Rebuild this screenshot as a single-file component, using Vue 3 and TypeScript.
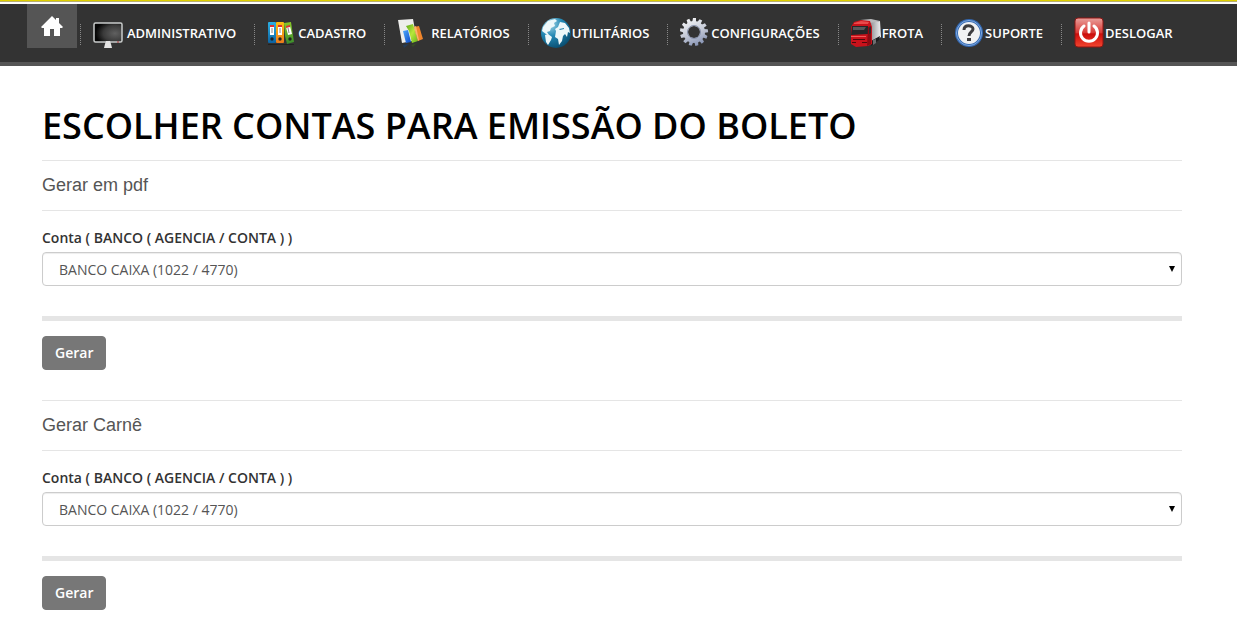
<script setup lang="ts">
import { ref } from 'vue'

interface NavItem {
  id: string
  label: string
  wide?: boolean
}

const items: NavItem[] = [
  { id: 'admin', label: 'ADMINISTRATIVO', wide: true },
  { id: 'cadastro', label: 'CADASTRO' },
  { id: 'relatorios', label: 'RELATÓRIOS', wide: true },
  { id: 'utilitarios', label: 'UTILITÁRIOS' },
  { id: 'config', label: 'CONFIGURAÇÕES' },
  { id: 'frota', label: 'FROTA' },
  { id: 'suporte', label: 'SUPORTE' },
  { id: 'deslogar', label: 'DESLOGAR' },
]

const contas: string[] = ['BANCO CAIXA (1022 / 4770)']

const secoes = ref([
  { id: 'pdf', titulo: 'Gerar em pdf', conta: contas[0] },
  { id: 'carne', titulo: 'Gerar Carnê', conta: contas[0] },
])

const teeth = Array.from({ length: 13 }, (_, i) => (i * 360) / 13)
</script>

<template>
  <header class="topbar">
    <nav class="nav" aria-label="Menu principal">
      <a class="home" href="#" aria-label="Início">
        <svg width="22" height="20" viewBox="0 0 22 20"><path fill="#fff" d="M11 0L0 11l1 1h2v8h6v-7h4v7h6v-8h2l1-1-4-4V2h-3v2z" /></svg>
      </a>
      <a v-for="item in items" :key="item.id" class="item" href="#">
        <span class="icon" :class="{ wide: item.wide }">
          <svg width="32" height="32" viewBox="0 0 32 32" aria-hidden="true">
            <template v-if="item.id === 'admin'">
              <defs>
                <radialGradient id="scr" cx=".75" cy=".55" r=".7"><stop offset="0" stop-color="#606060" /><stop offset=".6" stop-color="#3a3a3a" /><stop offset="1" stop-color="#050505" /></radialGradient>
              </defs>
              <rect x="2" y="6" width="28" height="19" rx="1.5" fill="url(#scr)" stroke="#c9cccb" stroke-width="1.5" />
              <path fill="#e4e4e4" d="M14 24h4l1 3 1 4h-8l1-4z" />
              <path stroke="#a33" d="M25 25h2" />
            </template>
            <template v-else-if="item.id === 'cadastro'">
              <defs>
                <linearGradient id="bl" x1="0" y1="0" x2="0" y2="1"><stop offset="0" stop-color="#2cb0e4" /><stop offset="1" stop-color="#0d62a0" /></linearGradient>
                <linearGradient id="or" x1="0" y1="0" x2="0" y2="1"><stop offset="0" stop-color="#fcc013" /><stop offset="1" stop-color="#ec7a1b" /></linearGradient>
                <linearGradient id="gr" x1="0" y1="0" x2="0" y2="1"><stop offset="0" stop-color="#8bc926" /><stop offset="1" stop-color="#378a2c" /></linearGradient>
              </defs>
              <rect x="2" y="5" width="8" height="21" rx="1" fill="url(#bl)" />
              <rect x="10" y="5" width="8" height="21" rx="1" fill="url(#or)" />
              <path fill="url(#gr)" d="M18 6l7-1 3 20-7 2-2-8z" />
              <path fill="#fff" d="M4 9h4v9H4zM12 9h4v9h-4zM20 10l4-1 2 8-4 1z" />
              <path fill="#d33" d="M4 8h4v2H4zM12 8h4v2h-4zM20 9l4-1v2l-4 1z" />
              <path stroke="#8a8a8a" d="M6 11v5M14 11v5M22 11l1 5" />
              <g fill="#222"><circle cx="6" cy="22" r="1.700" /><circle cx="14" cy="22" r="1.700" /><circle cx="24" cy="22" r="1.700" /></g>
              <path fill="#111" opacity=".5" d="M2 27h26v1H2z" />
            </template>
            <template v-else-if="item.id === 'relatorios'">
              <defs>
                <linearGradient id="b2" x1="0" y1="0" x2="1" y2="1"><stop offset="0" stop-color="#4fa9fb" /><stop offset="1" stop-color="#0b49c8" /></linearGradient>
                <linearGradient id="g2" x1="0" y1="0" x2="1" y2="1"><stop offset="0" stop-color="#5aa81a" /><stop offset=".5" stop-color="#b8e83a" /><stop offset="1" stop-color="#62b01c" /></linearGradient>
              </defs>
              <path fill="#eeeeec" d="M2 3l15-1 4 21-15 3z" />
              <path fill="url(#b2)" d="M7 14l5-1 3 12-5 1z" />
              <path fill="url(#g2)" d="M10 9l7-2 5 17-6 2-3-12z" />
              <path fill="#f0862c" d="M18 10l5-1 4 13-5 2z" />
              <path fill="#f9b56b" d="M18 10l2-1 3 14-1 1z" />
              <path fill="#14447c" opacity=".5" d="M7 28l6-1-5 4z" />
              <path fill="#3f6a1c" opacity=".4" d="M15 28l6-2-4 4z" />
            </template>
            <template v-else-if="item.id === 'utilitarios'">
              <defs>
                <radialGradient id="globe" cx=".3" cy=".2" r=".9"><stop offset="0" stop-color="#a9d9e8" /><stop offset=".45" stop-color="#2388b4" /><stop offset="1" stop-color="#074769" /></radialGradient>
              </defs>
              <circle cx="16" cy="16" r="15" fill="url(#globe)" />
              <path fill="#eef8fa" d="M3 10l5-6 7-2 2 2-3 2 1 3-4 2-1 3-3 1 2 3-3-1-4-3zM5 18l3-1 4 3-1 3-3 5-2-3zM16 14l-1-2 3-2 2-5 5 1 4 5 1 5-2-1-1 5-2-3-2 2-1 5-3 4-1-6-3-2z" />
              <path fill="#2a86ad" d="M19 12l5-1v1l-4 1z" />
            </template>
            <template v-else-if="item.id === 'config'">
              <defs>
                <linearGradient id="gear" gradientUnits="userSpaceOnUse" x1="8" y1="2" x2="19" y2="29"><stop offset="0" stop-color="#f4f5f7" /><stop offset=".5" stop-color="#c6cbd8" /><stop offset="1" stop-color="#8592b3" /></linearGradient>
                <mask id="gearmask">
                  <path v-for="a in teeth" :key="a" :transform="`rotate(${a} 15 15)`" fill="#fff" d="M13 6l1-5h3l0 5z" />
                  <circle cx="15" cy="15" r="11" fill="#fff" />
                  <circle cx="15" cy="15" r="6" fill="#000" />
                </mask>
              </defs>
              <rect width="32" height="32" fill="url(#gear)" mask="url(#gearmask)" />
              <circle cx="15" cy="15" r="6.5" fill="none" stroke="#8690aa" />
            </template>
            <template v-else-if="item.id === 'frota'">
              <defs>
                <linearGradient id="box" x1="0" y1="0" x2="1" y2="0"><stop offset="0" stop-color="#8b8c8e" /><stop offset=".6" stop-color="#c9cacc" /><stop offset="1" stop-color="#f0f0f1" /></linearGradient>
              </defs>
              <path fill="#b9babc" d="M10 3l11-1 9 2-9 3z" />
              <path fill="url(#box)" d="M20 6l10-2 1 16-9 6z" />
              <path fill="#1d1d1f" d="M21 24l9-5-1 4-8 6z" />
              <path fill="#c9121b" d="M1 10l3-5 7-2 9 1 2 6v17l-4 2-12 1-5-3z" />
              <path fill="#ea4a4b" d="M4 6l7-2 8 1-1 2H4z" />
              <path fill="#262628" d="M2 9h16v8l-17 1z" />
              <path fill="#57585b" d="M3 10h13l-2 3H3z" />
              <path fill="#8c0a12" d="M18 10l3-1v18l-4 2z" />
              <path fill="#2b2b2d" d="M19 11l2-1v6l-2 1z" />
              <path fill="#f25a57" d="M1 19h15v1H1z" />
              <path fill="#4d080c" d="M3 22h12v1H3zM2 25h4v1H2zM12 25h5v1h-5z" />
              <path fill="#6d6e70" d="M23 23l3-1v4l-3 2z" />
            </template>
            <template v-else-if="item.id === 'suporte'">
              <circle cx="16" cy="16" r="14" fill="#3468b0" />
              <circle cx="16" cy="16" r="12.5" fill="none" stroke="#82ace2" />
              <circle cx="16" cy="16" r="11" fill="#f1f2f3" />
              <path fill="none" stroke="#3d3d40" stroke-width="3" d="M11 13c0-6 9-5 9-1 0 3-4 3-4 7" />
              <path fill="#3d3d40" d="M14 21h4v3h-4z" />
            </template>
            <template v-else>
              <defs>
                <linearGradient id="pow" x1="0" y1="0" x2="0" y2="1"><stop offset="0" stop-color="#e9a09c" /><stop offset=".5" stop-color="#d93a35" /><stop offset=".55" stop-color="#cb0d0b" /><stop offset="1" stop-color="#f2452f" /></linearGradient>
              </defs>
              <rect x="2" y="1" width="28" height="29" rx="3" fill="url(#pow)" stroke="#8f1512" />
              <path fill="none" stroke="#fff" stroke-width="3" stroke-linecap="round" d="M11 9a8.500 8.500 0 1 0 10 0M16 6v9" />
            </template>
          </svg>
        </span>
        <span>{{ item.label }}</span>
      </a>
    </nav>
  </header>

  <main class="content">
    <h1>ESCOLHER CONTAS PARA EMISSÃO DO BOLETO</h1>
    <form v-for="s in secoes" :key="s.id" class="section" @submit.prevent>
      <h2>{{ s.titulo }}</h2>
      <label :for="s.id">Conta ( BANCO ( AGENCIA / CONTA ) )</label>
      <div class="field">
        <select :id="s.id" v-model="s.conta">
          <option v-for="c in contas" :key="c" :value="c">{{ c }}</option>
        </select>
        <svg class="arrow" width="6" height="6" viewBox="0 0 6 6" aria-hidden="true"><path d="M0 0h6L3 6z" /></svg>
      </div>
      <hr />
      <button type="submit">Gerar</button>
    </form>
  </main>
</template>

<style>
body {
  margin: 0;
  background: #fff;
}
</style>

<style scoped>
.topbar {
  padding-top: 4px;
  background: linear-gradient(#e0d000 0 1px, #b8b070 1px 2px, #fff 2px);
  font-family: 'Open Sans', sans-serif;
}
.nav {
  display: flex;
  align-items: flex-start;
  height: 58px;
  padding-left: 27px;
  background: #333;
  border-bottom: 4px solid #555;
}
.home {
  display: flex;
  align-items: center;
  justify-content: center;
  width: 50px;
  height: 44px;
  margin-right: 3px;
  background: #555;
}
.item {
  display: flex;
  align-items: center;
  height: 58px;
  padding: 0 18px 0 12px;
  color: #fff;
  font-size: 13px;
  font-weight: 600;
  text-decoration: none;
  white-space: nowrap;
  background: repeating-linear-gradient(#888 0 1px, transparent 1px 2px) left 20px / 1px 21px no-repeat;
}
.icon {
  display: flex;
  width: 32px;
}
.icon.wide {
  width: 35px;
}
.content {
  padding: 38px 55px 23px 42px;
  font-family: 'Open Sans', sans-serif;
}
h1 {
  margin: 0;
  padding-bottom: 12px;
  color: #000;
  font-size: 36px;
  font-weight: 600;
  line-height: 44px;
}
.section {
  margin-bottom: 30px;
}
h2 {
  margin: 0;
  padding: 14px 0 15px;
  border: solid #e5e5e5;
  border-width: 1px 0;
  color: #555;
  font: 400 18px/20px 'Liberation Sans', Arial, sans-serif;
}
label {
  display: block;
  margin-top: 17px;
  color: #333;
  font-size: 14px;
  font-weight: 600;
  line-height: 20px;
}
.field {
  position: relative;
  margin-top: 4px;
}
select {
  display: block;
  width: 100%;
  height: 34px;
  padding: 1px 16px 0;
  appearance: none;
  border: 1px solid #ccc;
  border-radius: 4px;
  background: #fff;
  box-shadow: inset 0 1px 1px rgba(0, 0, 0, 0.075);
  color: #555;
  font: 400 14px/20px 'Open Sans', sans-serif;
}
.arrow {
  position: absolute;
  top: 14px;
  right: 7px;
  pointer-events: none;
}
hr {
  height: 5px;
  margin: 30px 0 15px;
  border: 0;
  background: #e5e5e5;
}
button {
  display: block;
  height: 34px;
  padding: 0 12px;
  border: 1px solid #777;
  border-radius: 4px;
  background: #777;
  color: #fff;
  font: 600 14px/20px 'Open Sans', sans-serif;
}
</style>
